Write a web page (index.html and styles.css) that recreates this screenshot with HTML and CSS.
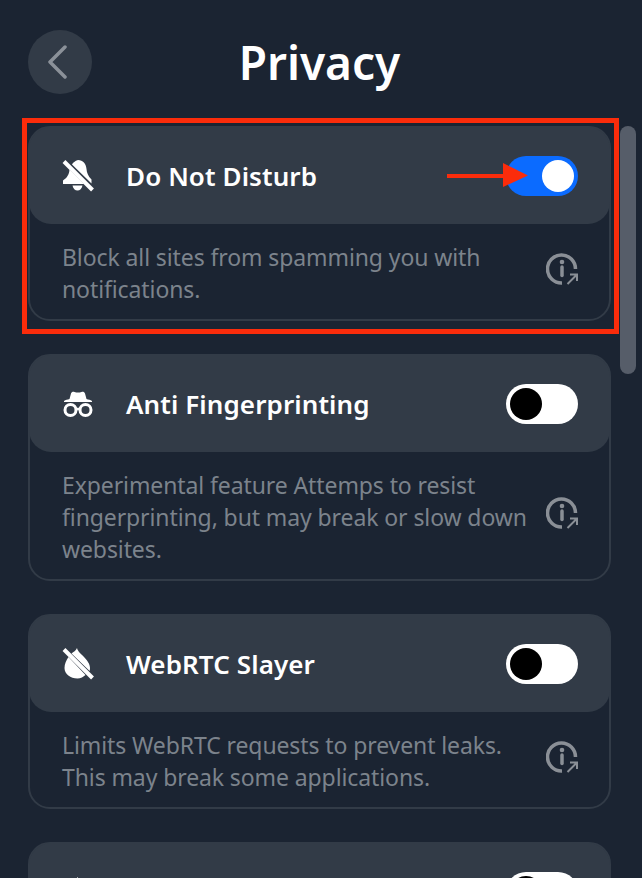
FILE: index.html
```html
<!DOCTYPE html>
<html lang="en">
<head>
  <meta charset="UTF-8" />
  <title>Privacy</title>
  <link rel="stylesheet" href="styles.css">
</head>
<body>
  <div class="page">
    <header class="top">
      <button class="back">
        <svg width="24" height="34" viewBox="0 0 24 34"><path d="M20 2 L5 17 L20 32" fill="none" stroke="#8b9199" stroke-width="3.5" stroke-linecap="round" stroke-linejoin="round"/></svg>
      </button>
      <h1>Privacy</h1>
    </header>

    <div class="list">
      <section class="card">
        <div class="head">
          <svg class="icon" viewBox="0 0 32 32"><path d="M16 0c5 0 8 3.500 8.500 9 .3 3.500 1.500 7 5 10.500v4L10 4.500C11 2.500 13 1 16 0zM7.500 9.500 22 24H1v-3.500C5.500 17.500 7.200 14 7.500 9.500zM10.500 25.500h10c-.5 3-2.700 5-5 5s-4.500-2-5-5z" fill="#fff"/><path d="M2 1.500 L30.500 30" stroke="#fff" stroke-width="4" fill="none"/></svg>
          <span class="name">Do Not Disturb</span>
          <span class="toggle on"></span>
        </div>
        <div class="body">
          <p>Block all sites from spamming you with notifications.</p>
          <svg class="info" viewBox="0 0 32 32"><use href="#info-icon"/></svg>
        </div>
      </section>

      <section class="card">
        <div class="head">
          <svg class="icon" viewBox="0 0 32 32"><path d="M9 5.500c.5-1.500 2-2 3.500-1.500 2.500.7 4.500.7 7 0 1.500-.5 3 0 3.500 1.500l1.500 5.500c2 .5 4 1 5.500 2v1H2v-1c1.500-1 3.500-1.500 5.500-2z" fill="#fff"/><circle cx="8.500" cy="22" r="5.500" fill="none" stroke="#fff" stroke-width="3"/><circle cx="23.500" cy="22" r="5.500" fill="none" stroke="#fff" stroke-width="3"/><path d="M14 21h4" stroke="#fff" stroke-width="2.500"/></svg>
          <span class="name">Anti Fingerprinting</span>
          <span class="toggle"></span>
        </div>
        <div class="body">
          <p>Experimental feature Attemps to resist fingerprinting, but may break or slow down websites.</p>
          <svg class="info" viewBox="0 0 32 32"><use href="#info-icon"/></svg>
        </div>
      </section>

      <section class="card">
        <div class="head">
          <svg class="icon" viewBox="0 0 32 32"><path d="M15 0c1 4 4 5.500 7 9 3 3 6 7 6 11 0 1-.1 2-.4 3L9.500 5.500C11.500 4 14 2.500 15 0zM6.500 9 23.500 27c-2 1.800-4.800 3.500-8 3.500C8.500 30.500 2.500 26 2.500 20c0-3.800 1.800-8 4-11z" fill="#fff"/><path d="M2 1.500 L30.500 30" stroke="#fff" stroke-width="4" fill="none"/></svg>
          <span class="name">WebRTC Slayer</span>
          <span class="toggle"></span>
        </div>
        <div class="body">
          <p>Limits WebRTC requests to prevent leaks. This may break some applications.</p>
          <svg class="info" viewBox="0 0 32 32"><use href="#info-icon"/></svg>
        </div>
      </section>

      <section class="card">
        <div class="head">
          <svg class="icon" viewBox="0 0 32 32"><path d="M16 1v30L7 23H1V9h6z" fill="#fff"/></svg>
          <span class="name"></span>
          <span class="toggle"></span>
        </div>
      </section>
    </div>

    <div class="scrollbar"></div>

    <!-- red annotation on top of the screenshot -->
    <div class="mark"></div>
    <svg class="arrow" width="81" height="24" viewBox="0 0 81 24">
      <path d="M0 11h56V0l25 12.500L56 24V15H0z" fill="#fb2c0b"/>
    </svg>
  </div>

  <svg width="0" height="0" class="defs">
    <symbol id="info-icon" viewBox="0 0 32 32">
      <path d="M29.500 16A14 14 0 1 0 16 30" fill="none" stroke="#8a8f96" stroke-width="3.500"/>
      <circle cx="16" cy="9" r="2.300" fill="#8a8f96"/>
      <path d="M16 14v8.500" stroke="#8a8f96" stroke-width="3.500" stroke-linecap="round"/>
      <path d="M21.500 31 31 21.500M24 21.500h7V28" fill="none" stroke="#8a8f96" stroke-width="2"/>
    </symbol>
  </svg>
</body>
</html>
```

FILE: styles.css
```css
html, body {
  margin: 0;
  padding: 0;
  height: 100%;
  overflow: hidden;
  background-color: #1b2432;
}

body {
  font-family: 'Noto Sans', 'Open Sans', sans-serif;
  color: #ffffff;
}

.page {
  position: relative;
  height: 878px;
  overflow: hidden;
  padding: 30px 31px 0 28px;
  box-sizing: border-box;
}

.top {
  position: relative;
  display: flex;
  align-items: center;
  justify-content: center;
  height: 64px;
}

.back {
  position: absolute;
  left: 0;
  top: 0;
  width: 64px;
  height: 64px;
  padding: 0 6px 0 0;
  border: none;
  border-radius: 50%;
  background-color: #323b47;
  display: flex;
  align-items: center;
  justify-content: center;
}

h1 {
  margin: 0;
  font-size: 46px;
  line-height: 64px;
  font-weight: 600;
}

.list {
  display: flex;
  flex-direction: column;
  gap: 33px;
  margin-top: 32px;
}

.card {
  border: 2px solid #323b47;
  border-radius: 22px;
}

.head {
  display: flex;
  align-items: center;
  height: 97px;
  margin: -1px -1px 0 -1px;
  padding: 0 32px 0 33px;
  background-color: #323b47;
  border-radius: 22px;
}

.icon {
  width: 32px;
  height: 32px;
  flex: none;
}

.name {
  flex: 1;
  margin-left: 32px;
  padding-top: 1px;
  font-size: 26px;
  letter-spacing: 0.1px;
  font-weight: 600;
}

.toggle {
  position: relative;
  width: 72px;
  height: 40px;
  border-radius: 20px;
  background-color: #ffffff;
}

.toggle::after {
  content: "";
  position: absolute;
  top: 4px;
  left: 4px;
  width: 32px;
  height: 32px;
  border-radius: 50%;
  background-color: #000000;
}

.toggle.on {
  background-color: #0b6bff;
}

.toggle.on::after {
  left: 36px;
  background-color: #ffffff;
}

.body {
  display: flex;
  align-items: center;
  justify-content: space-between;
  padding: 17px 31px 14px 32px;
}

.body p {
  margin: 0;
  max-width: 470px;
  font-size: 23px;
  letter-spacing: -0.1px;
  line-height: 32px;
  color: #7c838c;
}

.info {
  width: 32px;
  height: 32px;
  flex: none;
  margin-bottom: 8px;
}

.scrollbar {
  position: absolute;
  left: 620px;
  top: 126px;
  width: 16px;
  height: 248px;
  border-radius: 8px;
  background-color: #565d69;
}

.mark {
  position: absolute;
  left: 22px;
  top: 118px;
  width: 597px;
  height: 216px;
  box-sizing: border-box;
  border: 5px solid #fb2c0b;
}

.arrow {
  position: absolute;
  left: 447px;
  top: 163px;
}

.defs {
  position: absolute;
}
```
